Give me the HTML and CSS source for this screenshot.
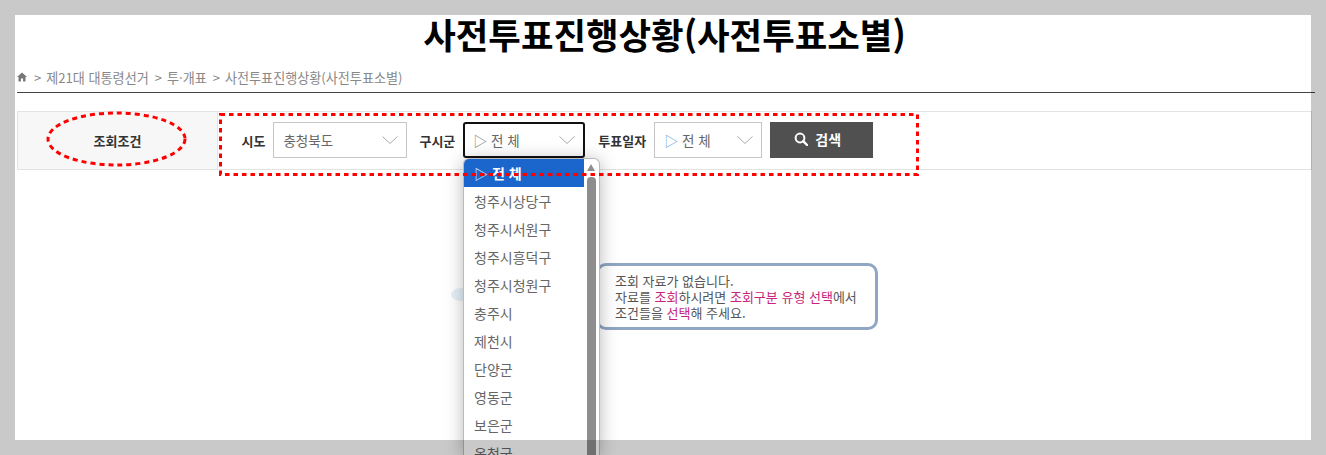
FILE: index.html
```html
<!DOCTYPE html>
<html lang="ko">
<head>
<meta charset="utf-8">
<title>사전투표진행상황</title>
<link rel="stylesheet" href="styles.css">
</head>
<body>
<main class="page">
  <h1 class="title">사전투표진행상황(사전투표소별)</h1>
  <nav class="crumbs">
    <svg class="home" viewBox="0 0 10 10" width="10" height="10"><path d="M5 .5 0 5h1.5v4.5h2.4V6.6h2.2v2.9h2.4V5H10z" fill="#777"/></svg>
    <span class="sep">&gt;</span><span>제21대 대통령선거</span>
    <span class="sep gap">&gt;</span><span>투·개표</span>
    <span class="sep gap">&gt;</span><span>사전투표진행상황(사전투표소별)</span>
  </nav>
  <div class="rule"></div>
  <section class="search">
    <div class="search-head">조회조건</div>
    <form class="search-form">
      <label class="lbl">시도</label>
      <div class="sel sel-a"><span>충청북도</span><svg class="chev" viewBox="0 0 16 8" width="16" height="8"><path d="M.5.5 8 7.5 15.5.5" fill="none" stroke="#aaa"/></svg></div>
      <label class="lbl l2">구시군</label>
      <div class="sel sel-b"><span><i class="tri">▷</i> 전 체</span><svg class="chev" viewBox="0 0 16 8" width="16" height="8"><path d="M.5.5 8 7.5 15.5.5" fill="none" stroke="#aaa"/></svg></div>
      <label class="lbl l3">투표일자</label>
      <div class="sel sel-c"><span><i class="tri tri-blue">▷</i> 전 체</span><svg class="chev" viewBox="0 0 16 8" width="16" height="8"><path d="M.5.5 8 7.5 15.5.5" fill="none" stroke="#aaa"/></svg></div>
      <div class="btn"><svg viewBox="0 0 14 14" width="14" height="14"><circle cx="6" cy="6" r="4.4" fill="none" stroke="#fff" stroke-width="2"/><path d="M9.2 9.2 13 13" stroke="#fff" stroke-width="2.4" stroke-linecap="round"/></svg><span>검색</span></div>
    </form>
  </section>
  <div class="empty">
    <p>조회 자료가 없습니다.</p>
    <p>자료를 <b>조회</b>하시려면 <b>조회구분 유형 선택</b>에서</p>
    <p>조건들을 <b>선택</b>해 주세요.</p>
  </div>
</main>
<div class="cloud"></div>
<div class="drop">
  <ul class="drop-list">
    <li class="on"><i class="tri tri-on">▷</i> 전 체</li>
    <li>청주시상당구</li>
    <li>청주시서원구</li>
    <li>청주시흥덕구</li>
    <li>청주시청원구</li>
    <li>충주시</li>
    <li>제천시</li>
    <li>단양군</li>
    <li>영동군</li>
    <li>보은군</li>
    <li>옥천군</li>
  </ul>
  <div class="scroll"><div class="arrow"></div><div class="thumb"></div></div>
</div>
<svg class="marks" viewBox="0 0 1326 455" width="1326" height="455">
  <ellipse cx="116.5" cy="139" rx="68.5" ry="26" fill="none" stroke="#f00" stroke-width="3" stroke-dasharray="5 4"/>
  <rect x="220.5" y="114.5" width="697" height="60" fill="none" stroke="#f00" stroke-width="3" stroke-dasharray="4.5 4"/>
</svg>
<div class="frame"></div>
</body>
</html>
```

FILE: styles.css
```css
* { box-sizing: border-box; }
html, body { margin: 0; padding: 0; height: 455px; overflow: hidden; background: #fff; }
body { font-family: "Noto Sans CJK KR", "Noto Sans", sans-serif; width: 1326px; position: relative; }
.page { padding: 15px 11px 0 17px; height: 455px; }
.title { margin: 0; height: 39px; line-height: 37px; font-size: 35.4px; font-weight: 700; color: #000; text-align: center; width: 1295px; white-space: nowrap; }
.crumbs { display: flex; align-items: center; height: 18px; margin-top: 14px; font-size: 13.1px; color: #888; white-space: pre; }
.home { margin-right: 6px; flex: none; }
.sep { margin-right: 5px; font-size: 13px; margin-left: 1px; }
.gap { margin-left: 6px; }
.rule { height: 1px; background: #444; margin-top: 6px; width: 1298px; }
.search { display: flex; height: 59px; margin-top: 18px; width: 1295px; border: 1px solid #e3e3e3; }
.search-head { width: 200px; background: #f7f7f7; border-right: 1px solid #e3e3e3; display: flex; align-items: center; justify-content: center; font-size: 13px; font-weight: 700; color: #333; }
.search-form { display: flex; align-items: center; padding: 0 0 1px 23.5px; }
.lbl { font-size: 13px; font-weight: 700; color: #333; white-space: nowrap; margin-right: 8px; }
.l2 { margin-left: 12px; }
.l3 { margin-left: 13px; }
.sel { height: 36px; border: 1px solid #c6c6c6; background: #fff; display: flex; align-items: center; justify-content: space-between; padding: 0 8px 0 9px; font-size: 13.5px; color: #666; white-space: nowrap; }
.sel-a { width: 134px; }
.sel-b { width: 122px; border: 2px solid #111; border-radius: 3px; padding-left: 8px; }
.sel-c { width: 108px; }
.tri { font-style: normal; color: #888; font-size: 14px; }
.tri-blue { color: #7aa7d8; }
.tri-on { color: #cfe2ff; }
.btn { margin-left: 8px; width: 103px; height: 36px; background: #505050; color: #fff; display: flex; align-items: center; justify-content: center; gap: 7px; padding: 0 8px 2px 0; font-size: 14px; font-weight: 700; }
.empty { position: relative; margin: 93px 0 0 579px; width: 282px; height: 67px; border: 3px solid #8fa6c4; border-radius: 10px; padding: 7px 0 0 16px; font-size: 13px; line-height: 16px; color: #555; background: #fff; }
.empty p { margin: 0; white-space: nowrap; }
.empty b { font-weight: 400; color: #c8247c; }
.cloud { position: absolute; left: 451px; top: 288px; width: 20px; height: 13px; border-radius: 50%; background: #e6f0f9; }
.drop { position: absolute; left: 463px; top: 158px; width: 137px; height: 297px; background: #fff; border: 1px solid #bbb; border-bottom: 0; border-radius: 6px 6px 0 0; box-shadow: 0 2px 18px rgba(0, 0, 0, .28); display: flex; overflow: hidden; }
.drop-list { list-style: none; margin: 0; padding: 0; width: 120px; flex: none; font-size: 14px; color: #666; }
.drop-list li { height: 28px; line-height: 28px; padding-left: 10px; white-space: nowrap; }
.drop-list .on { background: #1a66cc; color: #fff; font-weight: 700; }
.scroll { margin-left: 3px; width: 9px; position: relative; }
.arrow { margin-top: 5px; width: 0; height: 0; border-left: 4.5px solid transparent; border-right: 4.5px solid transparent; border-bottom: 7px solid #8e8e8e; }
.thumb { margin-top: 6px; width: 9px; height: 300px; background: #8e8e8e; border-radius: 4px 4px 0 0; }
.marks { position: absolute; left: 0; top: 0; }
.frame { position: absolute; left: 0; top: 0; width: 1326px; height: 455px; border: 15px solid rgba(0, 0, 0, .21); }
```
